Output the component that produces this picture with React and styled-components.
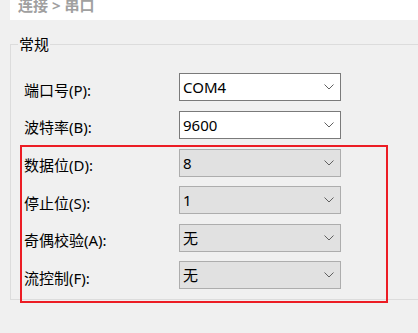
import React from "react";
import styled, { createGlobalStyle } from "styled-components";

const Global = createGlobalStyle`
  html, body { margin: 0; padding: 0; background: #f0f0f0; }
  body {
    width: 418px; height: 333px; overflow: hidden;
    font-family: "Noto Sans", "Noto Sans CJK SC", sans-serif;
    font-size: 15px; color: #000;
  }
`;

const Page = styled.div`
  display: flex;
  flex-direction: column;
  width: 418px;
  height: 333px;
`;

const Breadcrumb = styled.div`
  margin-left: 10px;
  height: 20px;
  background: #fff;
  overflow: hidden;
  padding-left: 8px;
`;

const CrumbText = styled.div`
  margin-top: -5px;
  line-height: 20px;
  font-size: 15px;
  font-weight: 700;
  color: #a0a0a0;
  white-space: pre;
`;

const Group = styled.div`
  position: relative;
  margin: 24px -20px 0 10px;
  border: 1px solid #dcdcdc;
  height: 256px;
  padding: 28px 0 0 9px;
  box-sizing: border-box;
`;

const Legend = styled.div`
  position: absolute;
  top: -9px;
  left: 7px;
  padding: 0 1px;
  background: #f0f0f0;
  line-height: 16px;
  font-size: 15px;
`;

const Rows = styled.div`
  display: flex;
  flex-direction: column;
  gap: 9.5px;
  padding-left: ${(p) => p.$indent || 0}px;
`;

const Highlight = styled.div`
  margin-top: 6px;
  width: 368px;
  box-sizing: border-box;
  border: 2px solid #ec1c24;
  padding: 2px 0 12px 2px;
`;

const Row = styled.div`
  display: flex;
  align-items: center;
  height: 28px;
`;

const Label = styled.div`
  width: 155px;
  padding-top: 4px;
  white-space: nowrap;
`;

const Combo = styled.div`
  display: flex;
  align-items: center;
  justify-content: space-between;
  width: 162px;
  height: 28px;
  box-sizing: border-box;
  border: 1px solid ${(p) => (p.$disabled ? "#adadad" : "#7a7a7a")};
  background: ${(p) => (p.$disabled ? "#e1e1e1" : "#ffffff")};
  padding: 0 6px 0 3px;
`;

const Value = styled.span`
  line-height: 20px;
`;

const Chevron = () => (
  <svg width="10" height="6" viewBox="0 0 10 6">
    <path d="M0.5 0.5 L5 5 L9.5 0.5" fill="none" stroke="#606060" strokeWidth="1" />
  </svg>
);

const Field = ({ label, value, disabled }) => (
  <Row>
    <Label>{label}</Label>
    <Combo $disabled={disabled}>
      <Value>{value}</Value>
      <Chevron />
    </Combo>
  </Row>
);

export default function App() {
  return (
    <>
      <Global />
      <Page>
        <Breadcrumb>
          <CrumbText>连接 &gt; 串口</CrumbText>
        </Breadcrumb>
        <Group>
          <Legend>常规</Legend>
          <Rows $indent={4}>
            <Field label="端口号(P):" value="COM4" />
            <Field label="波特率(B):" value="9600" />
          </Rows>
          <Highlight>
            <Rows>
              <Field label="数据位(D):" value="8" disabled />
              <Field label="停止位(S):" value="1" disabled />
              <Field label="奇偶校验(A):" value="无" disabled />
              <Field label="流控制(F):" value="无" disabled />
            </Rows>
          </Highlight>
        </Group>
      </Page>
    </>
  );
}
